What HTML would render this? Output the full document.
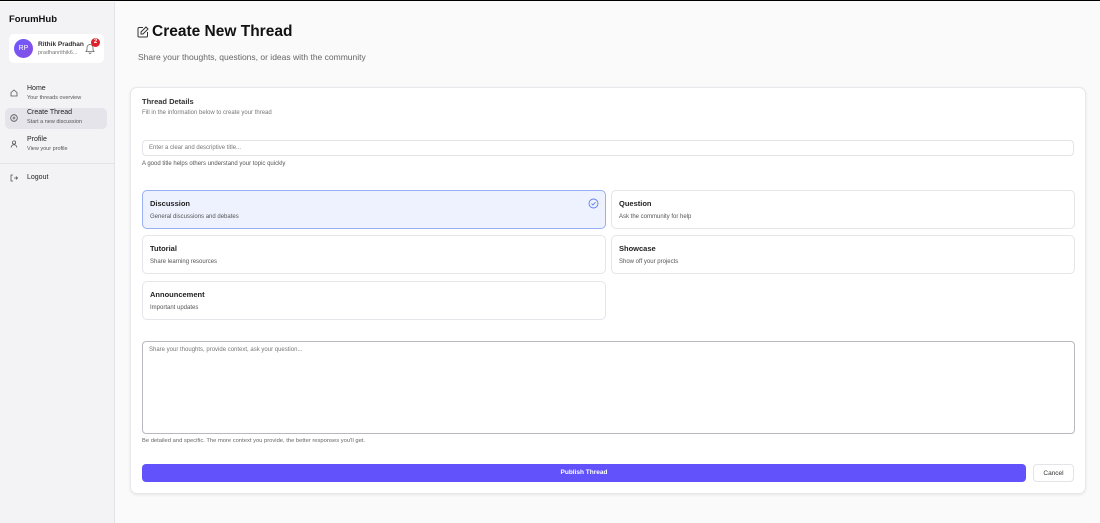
<!DOCTYPE html>
<html><head><style>
*{box-sizing:border-box;margin:0;padding:0}
body{width:1100px;height:522px;overflow:hidden;font-family:"Liberation Sans",sans-serif;background:#fafafa;position:relative;border-top:1px solid #000;color:#111}
.a{position:absolute}
.sb{left:0;top:1px;width:115px;height:521px;background:#f3f3f6;border-right:1px solid #e3e3e8}
.nav{left:5px;width:102px;height:22px;border-radius:5px}
.nt{font-size:7px;color:#222;position:absolute;left:22px;top:1px}
.ns{font-size:5.5px;color:#555;position:absolute;left:22px;top:11px}
.opt{background:#fff;border:1px solid #e5e5ea;border-radius:5px;height:39px;width:464px}
.opt b{position:absolute;left:7px;top:8px;font-size:7.5px;color:#222}
.opt span{position:absolute;left:7px;top:23px;font-size:6px;color:#555}
</style></head><body>
<div class="a sb">
 <div class="a" style="left:9px;top:12px;font-size:9.5px;font-weight:bold">ForumHub</div>
 <div class="a" style="left:9px;top:32px;width:95px;height:29px;background:#fff;border-radius:5px">
  <div class="a" style="left:5px;top:5px;width:19px;height:19px;border-radius:50%;background:linear-gradient(135deg,#6b5cff,#8a4ce0);color:#fff;font-size:7px;text-align:center;line-height:19px">RP</div>
  <div class="a" style="left:29px;top:7px;font-size:6.5px;font-weight:bold;color:#333">Rithik Pradhan</div>
  <div class="a" style="left:29px;top:16px;font-size:5.5px;color:#777">pradhanrithik6...</div>
  <svg class="a" style="left:76px;top:9px" width="10" height="11" viewBox="0 0 10 11"><path d="M2 7V4.5a3 3 0 016 0V7l1 1.5H1z M4 9.5a1 1 0 002 0" fill="none" stroke="#666" stroke-width=".8"/></svg>
  <div class="a" style="left:82px;top:4px;width:9px;height:9px;border-radius:50%;background:#e0202a;color:#fff;font-size:6px;font-weight:bold;text-align:center;line-height:9px">2</div>
 </div>
 <div class="a nav" style="top:82px"><svg class="a" style="left:5px;top:5px" width="8" height="8" viewBox="0 0 8 8"><path d="M1 3.5L4 1l3 2.5V7H1z" fill="none" stroke="#555" stroke-width=".8"/></svg><div class="nt">Home</div><div class="ns">Your threads overview</div></div>
 <div class="a nav" style="top:106px;height:21px;background:#e4e4ea"><svg class="a" style="left:5px;top:6px" width="8" height="8" viewBox="0 0 8 8"><circle cx="4" cy="4" r="3.3" fill="none" stroke="#555" stroke-width=".8"/><path d="M4 2.5v3M2.5 4h3" stroke="#555" stroke-width=".8"/></svg><div class="nt">Create Thread</div><div class="ns">Start a new discussion</div></div>
 <div class="a nav" style="top:133px"><svg class="a" style="left:5px;top:5px" width="8" height="8" viewBox="0 0 8 8"><circle cx="4" cy="2.5" r="1.6" fill="none" stroke="#555" stroke-width=".8"/><path d="M1.2 7.5a2.8 2.8 0 015.6 0" fill="none" stroke="#555" stroke-width=".8"/></svg><div class="nt">Profile</div><div class="ns">View your profile</div></div>
 <div class="a" style="left:0;top:161px;width:114px;height:1px;background:#e3e3e8"></div>
 <svg class="a" style="left:10px;top:172px" width="8" height="8" viewBox="0 0 8 8"><path d="M3 1H1v6h2M4 4h3.5M6 2.5L7.5 4 6 5.5" fill="none" stroke="#555" stroke-width=".8"/></svg>
 <div class="a" style="left:27px;top:172px;font-size:7px;color:#222">Logout</div>
</div>
<svg class="a" style="left:137px;top:25px" width="12" height="12" viewBox="0 0 12 12"><path d="M6 1.5H2a1 1 0 00-1 1v7.5a1 1 0 001 1h7.5a1 1 0 001-1V6M9 1l2 2-5 5H4V6z" fill="none" stroke="#333" stroke-width="1"/></svg>
<div class="a" style="left:152px;top:22px;font-size:15.5px;font-weight:bold">Create New Thread</div>
<div class="a" style="left:138px;top:51px;font-size:8.5px;color:#666">Share your thoughts, questions, or ideas with the community</div>
<div class="a" style="left:130px;top:86px;width:956px;height:407px;background:#fff;border:1px solid #e8e8ec;border-radius:7px;box-shadow:0 1px 3px rgba(0,0,0,.08)"></div>
<div class="a" style="left:142px;top:96px;font-size:7.5px;font-weight:bold;color:#333">Thread Details</div>
<div class="a" style="left:142px;top:109px;font-size:6px;color:#777">Fill in the information below to create your thread</div>
<div class="a" style="left:142px;top:139px;width:932px;height:16px;border:1px solid #e3e3e8;border-radius:4px;font-size:6px;color:#777;padding:4px 6px">Enter a clear and descriptive title...</div>
<div class="a" style="left:142px;top:160px;font-size:6px;color:#555">A good title helps others understand your topic quickly</div>
<div class="a opt" style="left:142px;top:189px;background:#eef2ff;border-color:#98aef5"><b>Discussion</b><span>General discussions and debates</span><svg class="a" style="left:445px;top:7px" width="11" height="11" viewBox="0 0 11 11"><circle cx="5.5" cy="5.5" r="4.5" fill="none" stroke="#5b7ee8" stroke-width=".9"/><path d="M3.5 5.6l1.4 1.4 2.6-2.8" fill="none" stroke="#5b7ee8" stroke-width=".9"/></svg></div>
<div class="a opt" style="left:611px;top:189px"><b>Question</b><span>Ask the community for help</span></div>
<div class="a opt" style="left:142px;top:234px"><b>Tutorial</b><span>Share learning resources</span></div>
<div class="a opt" style="left:611px;top:234px"><b>Showcase</b><span>Show off your projects</span></div>
<div class="a opt" style="left:142px;top:280px"><b>Announcement</b><span>Important updates</span></div>
<div class="a" style="left:142px;top:340px;width:933px;height:93px;border:1px solid #b8b8c0;border-radius:4px;font-size:6px;color:#777;padding:5px 6px">Share your thoughts, provide context, ask your question...</div>
<div class="a" style="left:142px;top:437px;font-size:5.8px;color:#666">Be detailed and specific. The more context you provide, the better responses you'll get.</div>
<div class="a" style="left:142px;top:463px;width:884px;height:18px;background:#6152fb;border-radius:4px;color:#fff;font-size:6.5px;font-weight:bold;text-align:center;line-height:18px">Publish Thread</div>
<div class="a" style="left:1033px;top:463px;width:41px;height:18px;border:1px solid #e3e3e8;border-radius:4px;font-size:6.5px;text-align:center;line-height:17px;color:#333">Cancel</div>
</body></html>
